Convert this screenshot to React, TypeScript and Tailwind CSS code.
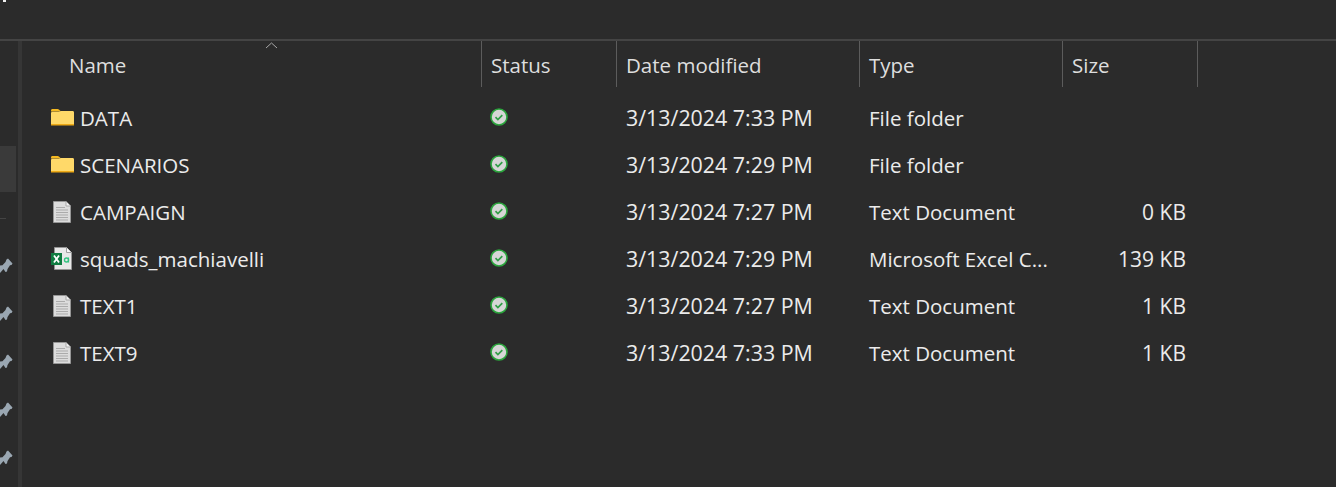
import React from 'react';

type Kind = 'folder' | 'text' | 'excel';

interface FileRow {
  name: string;
  date: string;
  type: string;
  size: string;
  kind: Kind;
}

const rows: FileRow[] = [
  { name: 'DATA', date: '3/13/2024 7:33 PM', type: 'File folder', size: '', kind: 'folder' },
  { name: 'SCENARIOS', date: '3/13/2024 7:29 PM', type: 'File folder', size: '', kind: 'folder' },
  { name: 'CAMPAIGN', date: '3/13/2024 7:27 PM', type: 'Text Document', size: '0 KB', kind: 'text' },
  { name: 'squads_machiavelli', date: '3/13/2024 7:29 PM', type: 'Microsoft Excel C...', size: '139 KB', kind: 'excel' },
  { name: 'TEXT1', date: '3/13/2024 7:27 PM', type: 'Text Document', size: '1 KB', kind: 'text' },
  { name: 'TEXT9', date: '3/13/2024 7:33 PM', type: 'Text Document', size: '1 KB', kind: 'text' },
];

const FolderIcon = () => (
  <svg width="23" height="18" viewBox="0 0 23 18" className="block -translate-y-px">
    <path d="M0 2.500C0 1.600.6 1 1.400 1h5.200c.5 0 .9.2 1.300.5L10 3.500H0z" fill="#f5b921" />
    <path d="M0 5.200c0-.8.6-1.400 1.300-1.400H7.500L10 3h11.600c.8 0 1.400.6 1.400 1.400V17H0z" fill="#ffd969" />
    <rect x="0" y="16" width="23" height="1.500" fill="#eea914" />
  </svg>
);

const TextIcon = () => (
  <svg width="18" height="22" viewBox="0 0 18 22" className="block ml-[2px]">
    <path d="M.5.5h12.500l4.500 4.500v16.500H.5z" fill="#dcdcdc" stroke="#969696" />
    <path d="M13 .5v4.500h4.500" fill="#f2f2f2" stroke="#a8a8a8" />
    <path d="M3 6.500h9M3 9h12M3 11.500h12M3 14h12M3 16.500h12M3 19h12" stroke="#ababab" strokeWidth="1" />
  </svg>
);

const ExcelIcon = () => (
  <svg width="21" height="23" viewBox="0 0 21 23" className="block">
    <path d="M3.500.5h12l5 5v17h-17z" fill="#e8e8e8" stroke="#949494" />
    <path d="M15.500.5v5h5" fill="#f8f8f8" stroke="#a0a0a0" />
    <rect x="0" y="6" width="11" height="12" fill="#107c41" />
    <path d="M3 8.500l5 7M8 8.500l-5 7" stroke="#fff" strokeWidth="1.800" />
    <circle cx="15.500" cy="13" r="2" fill="none" stroke="#33c481" strokeWidth="1.400" />
    <path d="M17.500 10.500v5" stroke="#33c481" strokeWidth="1.200" />
  </svg>
);

const StatusIcon = () => (
  <svg width="18" height="18" viewBox="0 0 18 18" className="block -ml-px -translate-y-px">
    <circle cx="9" cy="9" r="8" fill="#d6d6d6" stroke="#2aa53c" strokeWidth="1.600" />
    <path d="M5.500 9.200l2.400 2.300 4.400-4.300" fill="none" stroke="#2f9e46" strokeWidth="1.700" />
  </svg>
);

// pins of the quick access list, tail cut off by the window edge
const PinIcon = () => (
  <svg width="13" height="16" viewBox="0 0 13 16" className="block">
    <path d="M8 .5l4.500 5-1 1.500-1.500.2L7.500 11l-.5 2.500-1.500.5-2-3L0 15V7.500l2.500-.2L5.500 4 6.500 1.500z" fill="#9aa7b2" />
  </svg>
);

const icons: Record<Kind, React.ReactNode> = {
  folder: <FolderIcon />,
  text: <TextIcon />,
  excel: <ExcelIcon />,
};

const headerCell = 'h-[46px] pl-[9px] pt-[3px] flex items-center border-r border-[#5c5c5c] text-[#dedede]';

export default function App() {
  return (
    <div
      className="w-[1336px] h-[487px] overflow-hidden bg-[#2b2b2b] flex flex-col text-[21px] text-[#ebebeb]"
      style={{ fontFamily: '"Open Sans", "Noto Sans", sans-serif' }}
    >
      {/* toolbar strip */}
      <div className="h-[39px] shrink-0 border-b-2 border-[#444444] box-content">
        <div className="w-[3px] h-[2px] ml-[3px] bg-[#f0f0f0]" />
      </div>

      <div className="flex-1 flex min-h-0">
        {/* nav pane, cut off */}
        <div className="w-[18px] shrink-0 flex flex-col items-end">
          <div className="h-[105px] shrink-0" />
          <div className="w-full h-[46px] pr-[2px] shrink-0">
            <div className="w-[16px] h-full bg-[#3a3a3a]" />
          </div>
          <div className="h-[26px] shrink-0 w-full" />
          <div className="w-[6px] h-px bg-[#444444] mr-[12px] shrink-0" />
          <div className="flex flex-col gap-[32px] mt-[39px] w-full">
            {[0, 1, 2, 3, 4].map(i => (
              <div key={i} className="h-[16px]">
                <PinIcon />
              </div>
            ))}
          </div>
        </div>
        <div className="w-[4px] shrink-0 bg-[#363636]" />

        {/* file list */}
        <div className="flex-1 relative">
          <svg width="13" height="7" viewBox="0 0 13 7" className="absolute left-[243px] top-[1px]">
            <path d="M1 6l5.500-5 5.500 5" fill="none" stroke="#a8a8a8" strokeWidth="1" />
          </svg>
          <div className="grid grid-cols-[460px_135px_243px_203px_135px] w-[1176px] text-[20.500px]">
            <div className={`${headerCell} pl-[47px]`}>Name</div>
            <div className={headerCell}>Status</div>
            <div className={headerCell}>Date modified</div>
            <div className={headerCell}>Type</div>
            <div className={headerCell}>Size</div>
          </div>
          <div className="mt-[7px] w-[1176px]">
            {rows.map(row => (
              <div key={row.name} className="grid grid-cols-[460px_135px_243px_203px_135px] h-[47px] items-center">
                <div className="flex items-center pl-[29px]">
                  <div className="w-[29px] flex items-center">{icons[row.kind]}</div>
                  <span className="text-[20.500px] pt-px">{row.name}</span>
                </div>
                <div className="pl-[9px]">
                  <StatusIcon />
                </div>
                <div className="pl-[9px] pt-px text-[21.400px] whitespace-nowrap">{row.date}</div>
                <div className="pl-[9px] pt-px whitespace-nowrap text-[20.500px]">{row.type}</div>
                <div className="pr-[12px] pt-[2px] text-right">{row.size}</div>
              </div>
            ))}
          </div>
        </div>
      </div>
    </div>
  );
}
